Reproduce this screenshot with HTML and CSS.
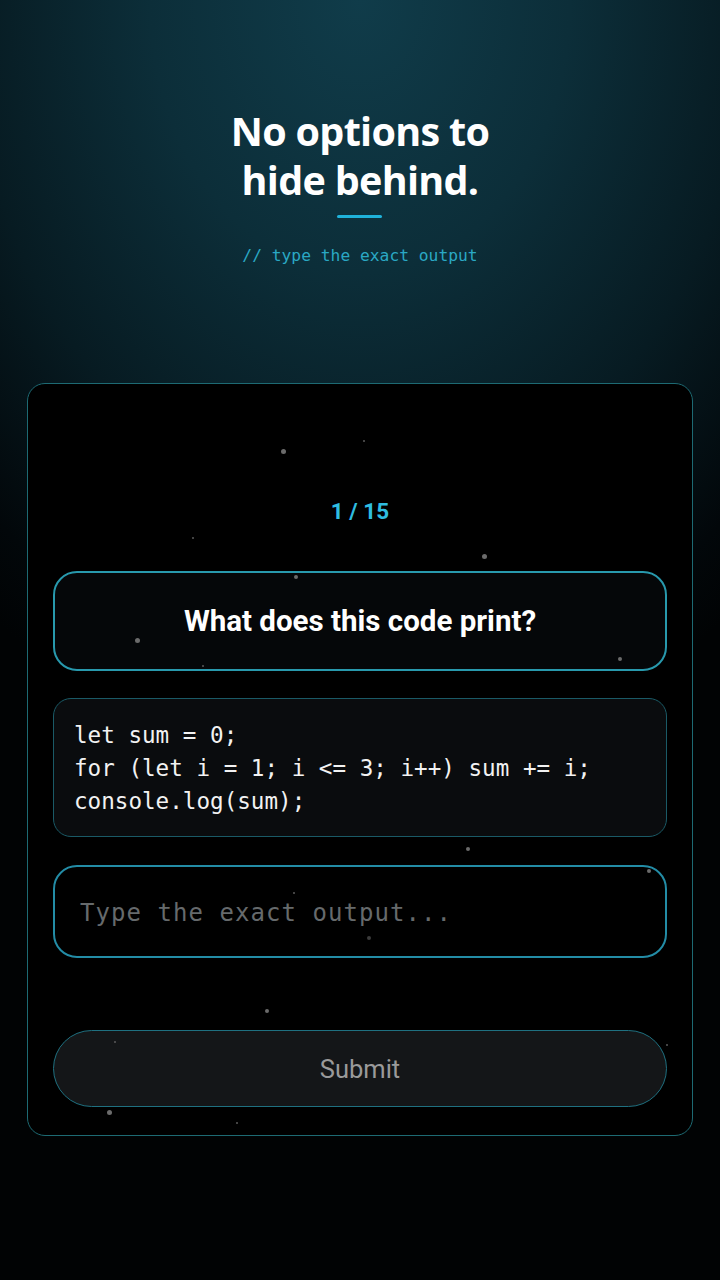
FILE: index.html
```html
<!DOCTYPE html>
<html lang="en">
<head>
<meta charset="utf-8">
<title>Quiz</title>
<link rel="stylesheet" href="styles.css">
</head>
<body>
<div class="page">
  <header class="hero">
    <h1 class="title">No options to<br>hide behind.</h1>
    <div class="bar"></div>
    <p class="sub">// type the exact output</p>
  </header>
  <main class="card">
    <div class="counter">1 / 15</div>
    <div class="question">What does this code print?</div>
    <pre class="code">let sum = 0;
for (let i = 1; i &lt;= 3; i++) sum += i;
console.log(sum);</pre>
    <div class="answer"><span class="placeholder">Type the exact output...</span></div>
    <button class="submit">Submit</button>
    <span class="dot d1"></span><span class="dot d2 sm"></span><span class="dot d3 sm"></span>
    <span class="dot d4"></span><span class="dot d5"></span><span class="dot d6"></span>
    <span class="dot d7"></span><span class="dot d8 sm"></span><span class="dot d9"></span>
    <span class="dot d10"></span><span class="dot d11 sm"></span><span class="dot d12"></span>
    <span class="dot d13"></span><span class="dot d14 sm"></span><span class="dot d15"></span>
    <span class="dot d16 sm"></span><span class="dot d17 sm"></span>
  </main>
</div>
</body>
</html>
```
FILE: styles.css
```css
html, body {
  margin: 0;
  padding: 0;
}
body {
  width: 720px;
  height: 1280px;
  overflow: hidden;
  background: #010304;
}
.page {
  width: 720px;
  height: 1280px;
  background:
    radial-gradient(ellipse 600px 780px at 50% 0%, #103c4a 0%, #0c2e39 35%, #071b22 65%, #02070a 90%, #010304 100%);
  display: flex;
  flex-direction: column;
  align-items: center;
}
.hero {
  display: flex;
  flex-direction: column;
  align-items: center;
  padding-top: 107px;
}
.title {
  margin: 0;
  font-family: "Open Sans", "Noto Sans", sans-serif;
  font-weight: 700;
  font-size: 39.5px;
  line-height: 49px;
  color: #ffffff;
  text-align: center;
  letter-spacing: -0.7px;
}
.bar {
  width: 45px;
  height: 3px;
  background: #1fb2da;
  margin-top: 10px;
  border-radius: 2px;
}
.sub {
  margin: 26px 0 0;
  font-family: "DejaVu Sans Mono", monospace;
  font-size: 16.3px;
  line-height: 24px;
  color: #2aa8c4;
}
.card {
  position: relative;
  box-sizing: border-box;
  width: 666px;
  height: 753px;
  margin-top: 115px;
  border: 1px solid #1d6a73;
  border-radius: 18px;
  background: #000000;
  padding: 111px 25px 0;
  display: flex;
  flex-direction: column;
}
.counter {
  text-align: center;
  font-family: Roboto, sans-serif;
  font-weight: 700;
  font-size: 22.5px;
  line-height: 32px;
  color: #2fbde0;
}
.question {
  box-sizing: border-box;
  height: 100px;
  margin-top: 44px;
  border: 2px solid #2899ad;
  border-radius: 24px;
  background: #050709;
  display: flex;
  align-items: center;
  justify-content: center;
  font-family: Roboto, sans-serif;
  font-weight: 700;
  font-size: 29.5px;
  color: #ffffff;
}
.code {
  box-sizing: border-box;
  height: 139px;
  margin: 27px 0 0;
  border: 1px solid #1a5a66;
  border-radius: 18px;
  background: #0a0c0e;
  padding: 20px 20px 18px;
  font-family: "DejaVu Sans Mono", monospace;
  font-size: 22.6px;
  line-height: 33px;
  color: #f2f2f2;
  white-space: pre;
}
.answer {
  box-sizing: border-box;
  height: 93px;
  margin-top: 28px;
  border: 2px solid #238ca6;
  border-radius: 24px;
  background: #000000;
  display: flex;
  align-items: center;
  padding: 3px 0 0 25px;
}
.placeholder {
  font-family: "DejaVu Sans Mono", monospace;
  font-size: 24px;
  letter-spacing: 1.05px;
  color: #666a6c;
}
.submit {
  box-sizing: border-box;
  height: 77px;
  margin-top: 72px;
  border: 1px solid #1f7080;
  border-radius: 39px;
  background: #141618;
  font-family: Roboto, sans-serif;
  font-weight: 400;
  font-size: 25.5px;
  color: #9a9a9a;
  padding: 0;
}
.dot {
  position: absolute;
  width: 5px;
  height: 5px;
  border-radius: 50%;
  background: #6b6b6b;
}
.dot.sm {
  width: 2px;
  height: 2px;
  background: #5a5a5a;
}
.d1 { left: 253px; top: 65px; }
.d2 { left: 335px; top: 56px; }
.d3 { left: 164px; top: 153px; }
.d4 { left: 454px; top: 170px; }
.d5 { left: 266px; top: 191px; width: 4px; height: 4px; }
.d6 { left: 107px; top: 254px; }
.d7 { left: 590px; top: 273px; width: 4px; height: 4px; }
.d8 { left: 174px; top: 281px; }
.d9 { left: 438px; top: 463px; width: 4px; height: 4px; }
.d10 { left: 619px; top: 485px; width: 4px; height: 4px; }
.d11 { left: 265px; top: 508px; }
.d12 { left: 339px; top: 552px; width: 4px; height: 4px; background: #3c3c3c; }
.d13 { left: 237px; top: 625px; width: 4px; height: 4px; }
.d14 { left: 638px; top: 660px; }
.d15 { left: 79px; top: 726px; }
.d16 { left: 208px; top: 738px; }
.d17 { left: 86px; top: 657px; }
```
